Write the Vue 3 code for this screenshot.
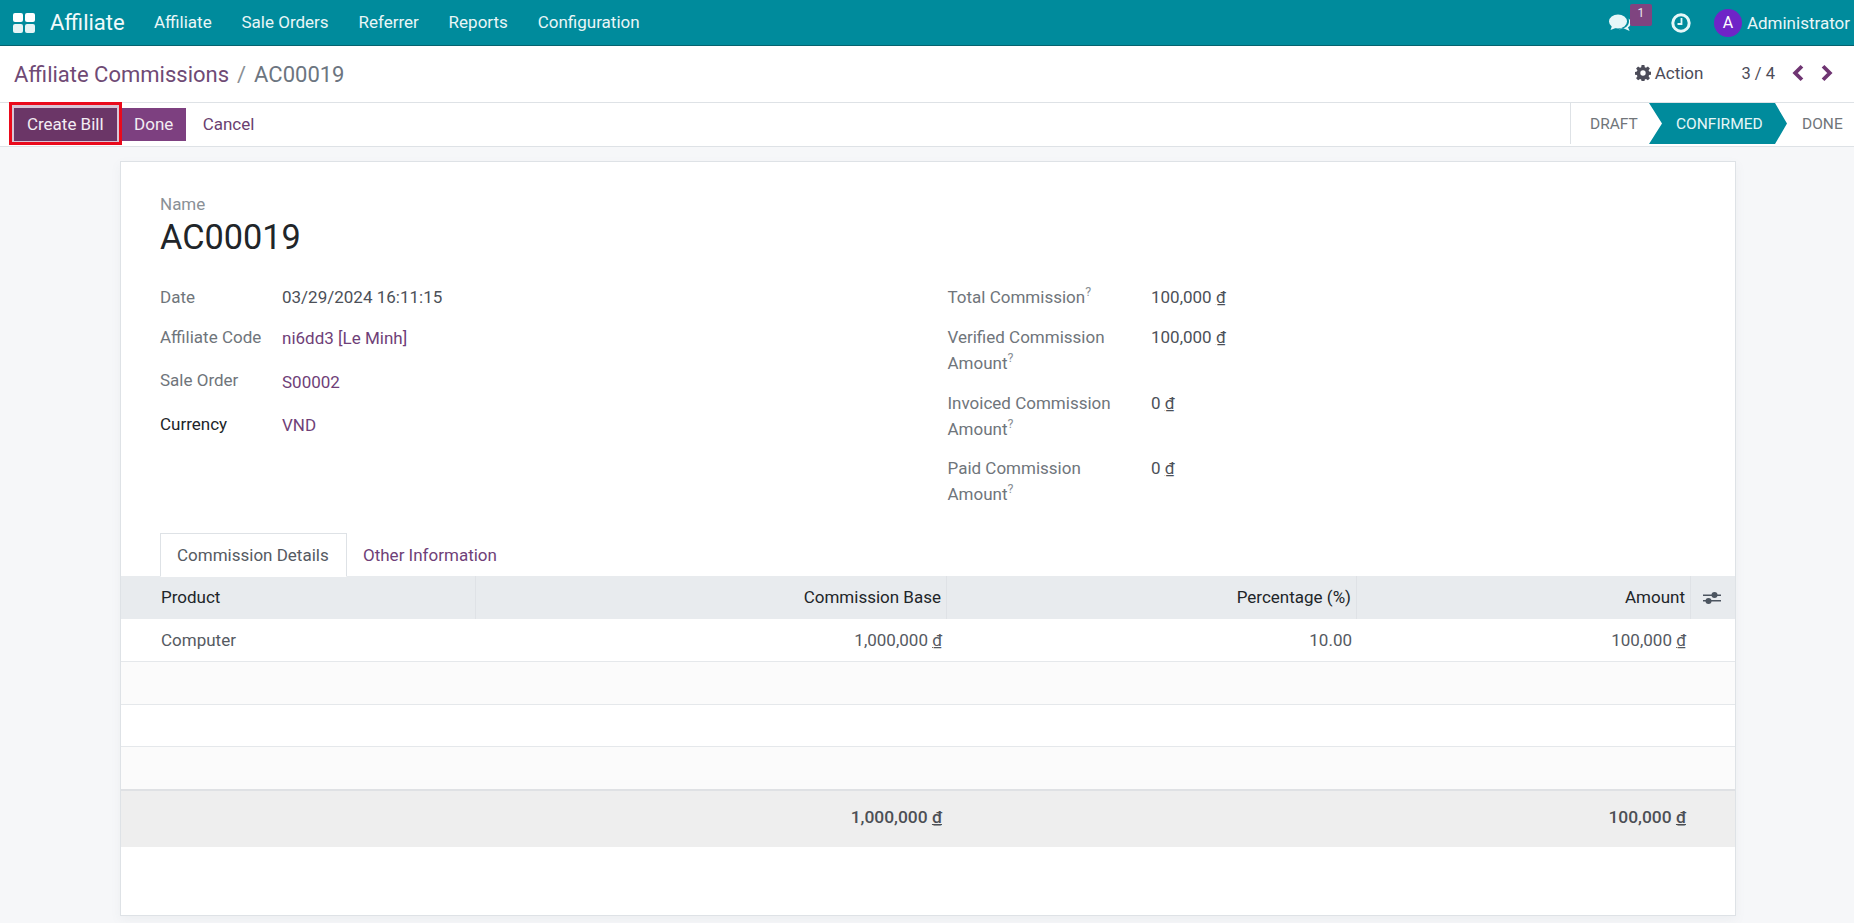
<script setup>
const menus = ['Affiliate', 'Sale Orders', 'Referrer', 'Reports', 'Configuration']
const cols = [
  { label: 'Product', cls: 'left' },
  { label: 'Commission Base', cls: 'right' },
  { label: 'Percentage (%)', cls: 'right' },
  { label: 'Amount', cls: 'right' },
]
const leftFields = [
  { label: 'Date', value: '03/29/2024 16:11:15' },
  { label: 'Affiliate Code', value: 'ni6dd3 [Le Minh]', link: true, shift: 'one' },
  { label: 'Sale Order', value: 'S00002', link: true, shift: 'two' },
  { label: 'Currency', value: 'VND', link: true, dark: true, shift: 'one' },
]
const rightFields = [
  { lines: ['Total Commission'], value: '100,000' },
  { lines: ['Verified Commission', 'Amount'], value: '100,000' },
  { lines: ['Invoiced Commission', 'Amount'], value: '0' },
  { lines: ['Paid Commission', 'Amount'], value: '0' },
]
</script>

<template>
  <div class="page">
    <header class="nav">
      <svg class="apps" viewBox="0 0 22 20" width="22" height="20" fill="#fff">
        <rect x="0" y="0" width="10" height="9" rx="2" />
        <rect x="12" y="0" width="10" height="9" rx="2" />
        <rect x="0" y="11" width="10" height="9" rx="2" opacity=".9" />
        <rect x="12" y="11" width="10" height="9" rx="2" opacity=".9" />
      </svg>
      <span class="brand">Affiliate</span>
      <nav class="menu">
        <span v-for="m in menus" :key="m">{{ m }}</span>
      </nav>
      <div class="systray">
        <div class="chat">
          <svg viewBox="0 0 22 18" width="22" height="18" fill="#e6f7f8">
            <ellipse cx="9" cy="7.5" rx="9" ry="7" />
            <path d="M3 12 L1.5 16 L8 13.5 Z" />
            <path d="M19.6 4.6 C21.2 5.8 22 7.2 22 8.8 C22 10.7 20.8 12.3 19 13.3 L20.6 17 L15 14.6 C13 14.6 11.2 14.2 9.8 15.2 C15.5 15.4 20 12 20 7.6 C20 6.5 19.9 5.5 19.6 4.6 Z" />
          </svg>
          <span class="badge">1</span>
        </div>
        <svg class="clock" viewBox="0 0 20 20" width="20" height="20" fill="none" stroke="#e6f7f8">
          <circle cx="10" cy="10" r="8.2" stroke-width="3" />
          <path d="M10.5 5 V11 H6.5" stroke-width="1.8" />
        </svg>
        <span class="avatar">A</span>
        <span class="user">Administrator</span>
      </div>
    </header>

    <section class="crumbs">
      <div class="crumb-text">
        <span class="crumb-link">Affiliate Commissions</span>
        <span class="crumb-sep">/</span>
        <span class="crumb-cur">AC00019</span>
      </div>
      <div class="action">
        <svg viewBox="0 0 16 16" width="16" height="16" fill="#4c4c59">
          <path fill-rule="evenodd" d="M6.6 0h2.8l.4 2.2 1.2.5L12.9 1.4l2 2-1.3 1.9.5 1.2 2.1.4v2.8l-2.1.4-.5 1.2 1.3 1.9-2 2-1.9-1.3-1.2.5-.4 2.1H6.6l-.4-2.1-1.2-.5-1.9 1.3-2-2 1.3-1.9-.5-1.2L0 9.700V6.900l1.900-.4.5-1.200L1.100 3.400l2-2L5 2.700l1.200-.5zM8 5.300a2.700 2.700 0 1 0 0 5.400 2.700 2.700 0 0 0 0-5.400z" />
        </svg>
        <span>Action</span>
      </div>
      <span class="pager">3 / 4</span>
      <svg class="chev" viewBox="0 0 12 16" width="14" height="18" fill="none" stroke="#6f3572" stroke-width="3.400">
        <path d="M9.500 2 L3.500 8 L9.500 14" />
      </svg>
      <svg class="chev next" viewBox="0 0 12 16" width="14" height="18" fill="none" stroke="#6f3572" stroke-width="3.400">
        <path d="M2.500 2 L8.500 8 L2.500 14" />
      </svg>
    </section>

    <section class="actions">
      <div class="buttons">
        <span class="highlight"><button class="btn dark">Create Bill</button></span>
        <button class="btn primary">Done</button>
        <button class="btn plain">Cancel</button>
      </div>
      <div class="status">
        <span class="st draft">DRAFT</span>
        <span class="st current">CONFIRMED</span>
        <span class="st done">DONE</span>
      </div>
    </section>

    <main class="content">
      <article class="card">
        <div class="head">
          <div class="name-label">Name</div>
          <h1 class="name">AC00019</h1>
        </div>

        <div class="groups">
          <div class="group left-group">
            <div v-for="f in leftFields" :key="f.label" class="field">
              <span class="f-label" :class="{ dark: f.dark }">{{ f.label }}</span>
              <span class="f-value" :class="[f.shift, { link: f.link }]">{{ f.value }}</span>
            </div>
          </div>
          <div class="group right-group">
            <div v-for="f in rightFields" :key="f.lines[0]" class="field">
              <span class="f-label">
                <template v-for="(l, i) in f.lines" :key="l">
                  <br v-if="i > 0" />{{ l }}
                </template><sup>?</sup>
              </span>
              <span class="f-value">{{ f.value }} <u>₫</u></span>
            </div>
          </div>
        </div>

        <div class="tabs">
          <span class="tab active">Commission Details</span>
          <span class="tab">Other Information</span>
        </div>

        <div class="table">
          <div class="tr th">
            <div v-for="c in cols" :key="c.label" class="cell" :class="c.cls">{{ c.label }}</div>
            <div class="cell opt">
              <svg viewBox="0 0 18 14" width="18" height="14">
                <path d="M0 4.300H18M0 9.700H18" stroke="#4c5560" stroke-width="1.500" />
                <circle cx="11.500" cy="4" r="3" fill="#4c5560" />
                <circle cx="5.500" cy="10" r="3" fill="#4c5560" />
              </svg>
            </div>
          </div>
          <div class="tr row-a">
            <div class="cell left">Computer</div>
            <div class="cell right">1,000,000 <u>₫</u></div>
            <div class="cell right">10.00</div>
            <div class="cell right">100,000 <u>₫</u></div>
            <div class="cell"></div>
          </div>
          <div class="tr row-b"></div>
          <div class="tr row-c"></div>
          <div class="tr row-d"></div>
          <div class="tr foot">
            <div class="cell"></div>
            <div class="cell right">1,000,000 <u>₫</u></div>
            <div class="cell"></div>
            <div class="cell right">100,000 <u>₫</u></div>
            <div class="cell"></div>
          </div>
        </div>
      </article>
    </main>
  </div>
</template>

<style>
html, body { margin: 0; background: #f6f7f9; }
</style>

<style scoped>
* { box-sizing: border-box; }
.page {
  width: 1854px;
  height: 923px;
  overflow: hidden;
  background: #f6f7f9;
  font-family: Roboto, "Noto Sans", sans-serif;
  font-size: 17px;
  color: #4c4c4c;
}
.nav {
  height: 46px;
  display: flex;
  align-items: center;
  background: #008b9c;
  border-bottom: 1px solid #05636f;
  color: #e9f6f7;
  padding-left: 13px;
}
.apps { flex: none; }
.brand { margin-left: 15px; font-size: 22px; width: 104px; color: #f2fafb; }
.menu { display: flex; gap: 29.800px; margin-top: -1px; }
.systray { margin-left: auto; display: flex; align-items: center; padding-right: 4px; }
.chat { display: flex; align-items: center; position: relative; width: 22px; margin-right: 40px; }
.badge {
  position: absolute;
  left: 21px;
  top: -10px;
  width: 22px;
  height: 22px;
  border-radius: 2px;
  background: #7f4480;
  color: #e9e9ef;
  font-size: 12px;
  text-align: center;
  line-height: 18px;
}
.avatar {
  margin-left: 23px;
  width: 28px;
  height: 28px;
  border-radius: 50%;
  background: #6f24c7;
  color: #fff;
  font-size: 16px;
  line-height: 28px;
  text-align: center;
}
.user { margin-left: 5px; font-size: 17px; }

.crumbs {
  height: 57px;
  background: #fff;
  display: flex;
  align-items: center;
  padding: 0 0 0 14px;
  border-bottom: 1px solid #dee2e6;
}
.crumb-text { font-size: 22px; margin-right: auto; margin-top: 1px; }
.crumb-link { color: #6f4a75; }
.crumb-sep { color: #8a8f95; margin: 0 8px; }
.crumb-cur { color: #6c7580; }
.action { display: flex; align-items: center; gap: 4px; color: #4c4c59; font-size: 17px; margin-top: -2px; margin-right: 1px; }
.pager { margin-left: 37px; margin-top: -2px; color: #4c4c59; font-size: 16.500px; }
.chev { margin-left: 16px; margin-top: -2px; }
.chev.next { margin-left: 15px; margin-right: 20px; }

.actions {
  height: 44px;
  background: #fff;
  display: flex;
  align-items: flex-start;
  justify-content: space-between;
  border-bottom: 1px solid #dee2e6;
}
.buttons { display: flex; align-items: center; padding-left: 9px; margin-top: -1px; }
.highlight {
  display: flex;
  width: 112.500px;
  height: 43px;
  padding: 3px 1.500px 1px;
  border: 3px solid #ea0a1c;
  background: #d9c6d6;
}
.btn {
  font: inherit;
  border: 0;
  height: 33px;
  padding: 0 0 1px;
  color: #f3edf3;
}
.btn.dark { width: 100%; height: auto; background: #6b3667; }
.btn.primary { width: 64.500px; background: #7d4080; margin-top: 2px; }
.btn.plain { width: 85px; background: none; color: #6b3f70; margin-top: 2px; }
.status { display: flex; align-items: stretch; height: 41px; font-size: 15.500px; }
.st { display: flex; align-items: center; color: #70757a; }
.draft { border-left: 1px solid #dee2e6; padding-left: 19px; width: 79px; }
.current {
  width: 138px;
  padding-left: 27px;
  background: #008b9c;
  color: #e6f6f7;
  clip-path: polygon(0 0, 126px 0, 138px 50%, 126px 100%, 0 100%, 13px 50%);
}
.done { width: 67px; padding-left: 15px; }

.content { padding: 14px 118px 0 120px; }
.card {
  height: 755px;
  background: #fff;
  border: 1px solid #dee2e6;
  box-shadow: 0 4px 10px rgba(120, 130, 140, .07);
}
.head { padding: 30px 0 0 39px; height: 122px; }
.name-label { line-height: 24px; color: #8a9096; }
.name { margin: 0; font-size: 34.300px; font-weight: 400; line-height: 42px; color: #212529; }

.groups { display: flex; padding-left: 39px; height: 249px; }
.group { display: grid; align-content: start; }
.left-group { width: 787.500px; grid-template-rows: 40px 43px 44px 26px; }
.right-group { grid-template-rows: 40px 66px 65px 52px; }
.field { display: grid; line-height: 26px; }
.left-group .field { grid-template-columns: 122px auto; }
.right-group .field { grid-template-columns: 203.500px auto; }
.f-label { color: #6f757b; }
.f-label.dark { color: #212529; }
.f-value { color: #4c5058; }
.f-value.link { color: #6f3f78; }
.f-value.one { padding-top: 1px; }
.f-value.two { padding-top: 2px; }
sup { font-size: 12.500px; line-height: 0; color: #8a9096; }

.tabs { display: flex; height: 44px; padding-left: 39px; border-bottom: 1px solid #dee2e6; }
.tab { padding: 0 16px; height: 44px; line-height: 44px; color: #6f3f78; }
.tab.active {
  width: 187px;
  line-height: 43px;
  color: #555a62;
  background: #fff;
  border: 1px solid #dee2e6;
  border-bottom-color: #fff;
  margin-right: 0;
}
.table { margin-top: -1px; }
.tr {
  display: grid;
  grid-template-columns: 355px 471px 410px 334px 1fr;
  border-bottom: 1px solid #e5e8eb;
  align-items: center;
}
.cell { padding: 0 5px; }
.cell.left { padding-left: 40px; }
.cell.right { text-align: right; }
.th { height: 43px; background: #e8ebee; color: #212529; border-bottom: 0; align-items: stretch; }
.th .cell { line-height: 43px; border-right: 1px solid #dfe2e6; }
.th .cell.opt { border: 0; display: flex; align-items: center; padding-left: 12px; }
.row-a { height: 43px; background: #fff; color: #555a62; }
.row-b { height: 43px; background: #fbfbfb; }
.row-c { height: 42px; background: #fff; }
.row-d { height: 44px; background: #fbfbfb; border-bottom: 2px solid #dfe1e4; }
.foot { height: 56px; padding-bottom: 5px; background: #eeeeee; border-bottom: 0; color: #4c4f55; font-size: 17.400px; font-weight: 500; }
u { text-decoration-thickness: 1px; }
</style>
